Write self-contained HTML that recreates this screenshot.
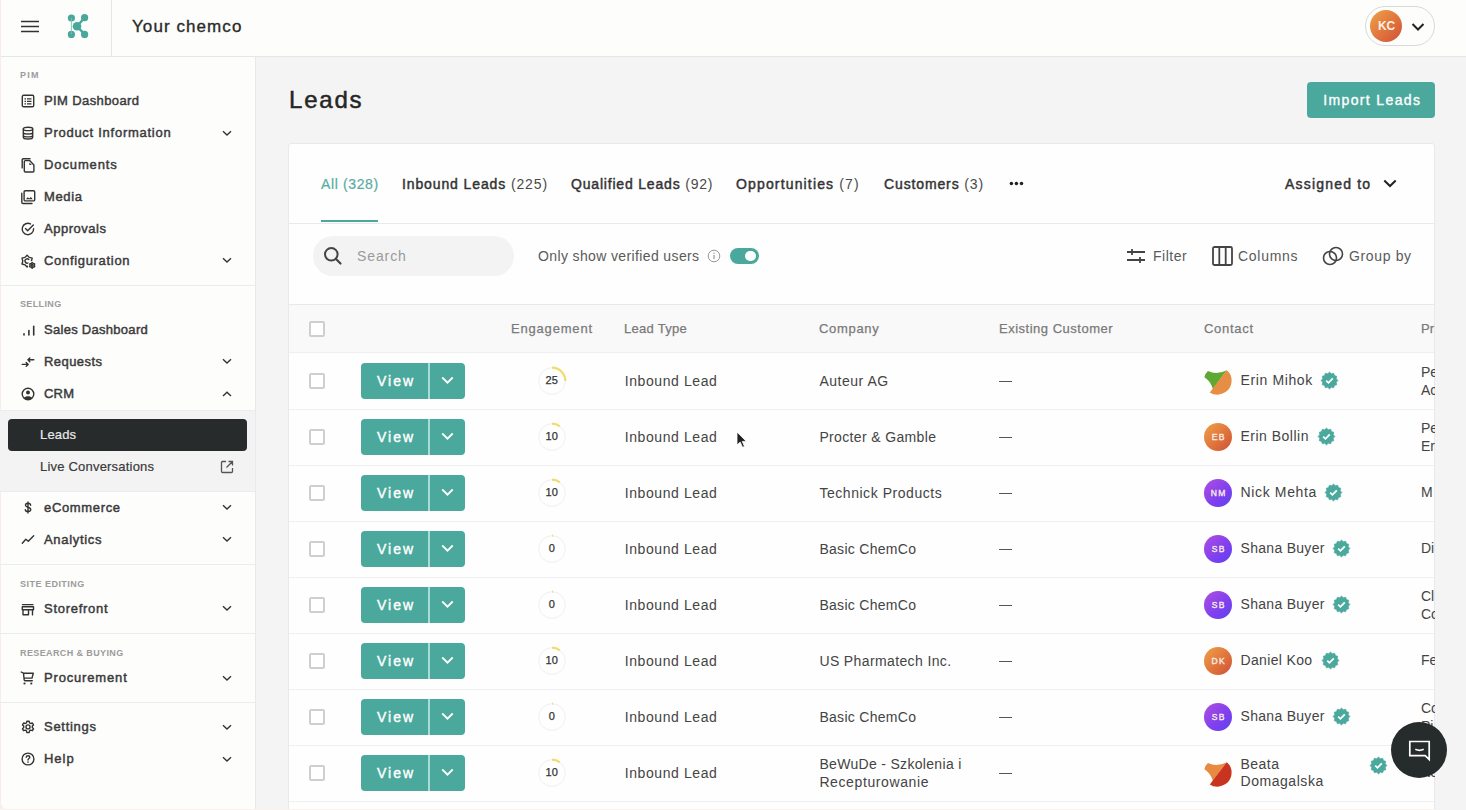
<!DOCTYPE html><html><head><meta charset="utf-8"><style>
*{box-sizing:border-box;margin:0;padding:0}
html,body{width:1466px;height:810px;overflow:hidden}
body{position:relative;background:#f4f4f4;font-family:"Liberation Sans",sans-serif;color:#333}
.a{position:absolute;white-space:nowrap}
svg.a{overflow:visible}
</style></head><body>
<div class="a" style="left:0;top:0;width:1466px;height:56px;background:#fdfdfc"></div>
<div class="a" style="left:0;top:56px;width:1466px;height:1px;background:#e5e6e9"></div>
<svg class="a" style="left:20px;top:19px" width="20" height="15" viewBox="0 0 20 15"><path d="M1 2.5H19M1 7.5H19M1 12.5H19" stroke="#333" stroke-width="1.7"/></svg>
<svg class="a" style="left:66px;top:13px" width="24" height="26" viewBox="0 0 24 26"><g fill="#4aa79b"><circle cx="5.4" cy="5" r="3.6"/><circle cx="18.6" cy="4.7" r="3.6"/><circle cx="5.4" cy="21.4" r="3.6"/><circle cx="18.6" cy="21.4" r="3.6"/><circle cx="11" cy="13.3" r="4.3"/></g><path d="M5.4 5V21.4" stroke="#7cc2b8" stroke-width="0.9" fill="none"/><path d="M18.6 4.7L11 13.3L18.6 21.4" stroke="#4aa79b" stroke-width="2.4" fill="none"/></svg>
<div class="a" style="left:111px;top:0;width:1px;height:56px;background:#e6e6ea"></div>
<div class="a" style="left:132px;top:15.81px;font-size:17px;line-height:21px;font-weight:normal;color:#2a2a2a;letter-spacing:1.075px;-webkit-text-stroke:0.35px #2a2a2a">Your chemco</div>
<div class="a" style="left:1365px;top:6px;width:70px;height:40px;border:1.3px solid #d9d9d9;border-radius:20px;background:#fdfdfc"></div>
<div class="a" style="left:1370px;top:10px;width:32px;height:32px;border-radius:50%;background:linear-gradient(135deg,#eea24a 0%,#e0743c 55%,#cf4f3a 100%)"></div>
<div class="a" style="left:1378px;top:18.94px;font-size:12px;line-height:15px;font-weight:bold;color:#fbeee6;letter-spacing:-0.084px;">KC</div>
<svg class="a" style="left:1411px;top:22px" width="14" height="10" viewBox="0 0 14 10"><path d="M1.5 2L7 7.5L12.5 2" stroke="#222" stroke-width="2" fill="none"/></svg>
<div class="a" style="left:0;top:57px;width:255px;height:753px;background:#fdfdfc;border-bottom-left-radius:10px"></div>
<div class="a" style="left:255px;top:57px;width:1px;height:753px;background:#e9e9ec"></div>
<div class="a" style="left:0;top:0;width:1px;height:810px;background:#f9eee7"></div>
<div class="a" style="left:20px;top:70.38px;font-size:9px;line-height:11px;font-weight:bold;color:#9b9b9b;letter-spacing:1.202px;">PIM</div>
<div class="a" style="left:44px;top:92.80px;font-size:13px;line-height:16px;font-weight:normal;color:#3a3a3a;letter-spacing:0.393px;-webkit-text-stroke:0.45px #3a3a3a">PIM Dashboard</div>
<svg class="a" style="left:21px;top:93.6px" width="14" height="14" viewBox="0 0 14 14"><rect x="1.3" y="1.3" width="11.4" height="11.4" rx="1.3" stroke="#333" stroke-width="1.4" fill="none" stroke-linecap="round" stroke-linejoin="round"/><path d="M3.5 4.9H5M6 4.9H10.5M3.5 7.4H5M6 7.4H10.5M3.5 9.9H5M6 9.9H10.5" stroke="#333" stroke-width="1.2"/></svg>
<div class="a" style="left:44px;top:124.90px;font-size:13px;line-height:16px;font-weight:normal;color:#3a3a3a;letter-spacing:0.733px;-webkit-text-stroke:0.45px #3a3a3a">Product Information</div>
<svg class="a" style="left:21px;top:125.7px" width="14" height="14" viewBox="0 0 14 14"><ellipse cx="7" cy="2.9" rx="4.7" ry="1.7" stroke="#333" stroke-width="1.4" fill="none" stroke-linecap="round" stroke-linejoin="round"/><path d="M2.3 2.9V11.2C2.3 12.2 4.4 13 7 13S11.7 12.2 11.7 11.2V2.9M2.3 6.3C2.3 7.3 4.4 8 7 8S11.7 7.3 11.7 6.3M2.3 9.2C2.3 10.2 4.4 10.9 7 10.9S11.7 10.2 11.7 9.2" stroke="#333" stroke-width="1.4" fill="none" stroke-linecap="round" stroke-linejoin="round"/></svg>
<svg class="a" style="left:222px;top:129.5px" width="10" height="7" viewBox="0 0 10 7"><path d="M1 1.3L5 5L9 1.3" stroke="#333" stroke-width="1.4" fill="none"/></svg>
<div class="a" style="left:44px;top:156.90px;font-size:13px;line-height:16px;font-weight:normal;color:#3a3a3a;letter-spacing:0.886px;-webkit-text-stroke:0.45px #3a3a3a">Documents</div>
<svg class="a" style="left:21px;top:157.7px" width="14" height="14" viewBox="0 0 14 14"><path d="M1.2 9.9V1.8Q1.2 0.7 2.3 0.7H9" stroke="#333" stroke-width="1.4" fill="none" stroke-linecap="round" stroke-linejoin="round"/><path d="M4.3 2.6H8.6L12.9 6.9V13C12.9 13.6 12.5 14 11.9 14H4.3C3.7 14 3.3 13.6 3.3 13V3.6C3.3 3 3.7 2.6 4.3 2.6Z" stroke="#333" stroke-width="1.4" fill="none" stroke-linecap="round" stroke-linejoin="round"/><path d="M8.3 4.6L10.8 7.1H8.3Z" fill="#333"/></svg>
<div class="a" style="left:44px;top:188.90px;font-size:13px;line-height:16px;font-weight:normal;color:#3a3a3a;letter-spacing:0.655px;-webkit-text-stroke:0.45px #3a3a3a">Media</div>
<svg class="a" style="left:21px;top:189.7px" width="14" height="14" viewBox="0 0 14 14"><path d="M0.8 3.2V12.3Q0.8 13.5 2 13.5H11" stroke="#333" stroke-width="1.4" fill="none" stroke-linecap="round" stroke-linejoin="round"/><rect x="3.1" y="0.7" width="10.6" height="10.2" rx="1.2" stroke="#333" stroke-width="1.4" fill="none" stroke-linecap="round" stroke-linejoin="round"/><path d="M4.9 9.3L6.8 7.3L8.2 8.5L9.8 7.1L11.8 9.3Z" fill="#333"/></svg>
<div class="a" style="left:44px;top:220.80px;font-size:13px;line-height:16px;font-weight:normal;color:#3a3a3a;letter-spacing:0.528px;-webkit-text-stroke:0.45px #3a3a3a">Approvals</div>
<svg class="a" style="left:21px;top:221.6px" width="14" height="14" viewBox="0 0 14 14"><path d="M12.6 6.6A5.7 5.7 0 1 1 9.5 1.9" stroke="#333" stroke-width="1.4" fill="none" stroke-linecap="round" stroke-linejoin="round"/><path d="M4.5 6.6L6.6 8.7L12.3 3" stroke="#333" stroke-width="1.4" fill="none" stroke-linecap="round" stroke-linejoin="round"/></svg>
<div class="a" style="left:44px;top:252.70px;font-size:13px;line-height:16px;font-weight:normal;color:#3a3a3a;letter-spacing:0.684px;-webkit-text-stroke:0.45px #3a3a3a">Configuration</div>
<svg class="a" style="left:21px;top:253.5px" width="14" height="14" viewBox="0 0 14 14"><path d="M6.10 1.20L8.25 3.38L11.21 4.15L10.40 7.10L11.21 10.05L8.25 10.82L6.10 13.00L3.95 10.82L0.99 10.05L1.80 7.10L0.99 4.15L3.95 3.38Z" stroke="#333" stroke-width="1.4" fill="none" stroke-linecap="round" stroke-linejoin="round"/><path d="M7.9 5.6A2.2 2.2 0 1 0 7.3 9" stroke="#333" stroke-width="1.4" fill="none" stroke-linecap="round" stroke-linejoin="round"/><circle cx="11.2" cy="11.3" r="4.3" fill="#fdfdfc"/><path d="M11.20 8.40L12.25 9.48L13.71 9.85L13.30 11.30L13.71 12.75L12.25 13.12L11.20 14.20L10.15 13.12L8.69 12.75L9.10 11.30L8.69 9.85L10.15 9.48Z" stroke="#333" stroke-width="1.4" fill="none" stroke-linecap="round" stroke-linejoin="round"/><circle cx="11.2" cy="11.3" r="0.9" stroke="#333" stroke-width="1.4" fill="none" stroke-linecap="round" stroke-linejoin="round"/></svg>
<svg class="a" style="left:222px;top:257.3px" width="10" height="7" viewBox="0 0 10 7"><path d="M1 1.3L5 5L9 1.3" stroke="#333" stroke-width="1.4" fill="none"/></svg>
<div class="a" style="left:0;top:285px;width:255px;height:1px;background:#ececef"></div>
<div class="a" style="left:20px;top:299.38px;font-size:9px;line-height:11px;font-weight:bold;color:#9b9b9b;letter-spacing:0.367px;">SELLING</div>
<div class="a" style="left:44px;top:322.00px;font-size:13px;line-height:16px;font-weight:normal;color:#3a3a3a;letter-spacing:0.286px;-webkit-text-stroke:0.45px #3a3a3a">Sales Dashboard</div>
<svg class="a" style="left:21px;top:322.8px" width="14" height="14" viewBox="0 0 14 14"><path d="M3 12V10.9M7.9 12V7.5M12.7 12V3.2" stroke="#333" stroke-width="1.6" stroke-linecap="round"/></svg>
<div class="a" style="left:44px;top:353.80px;font-size:13px;line-height:16px;font-weight:normal;color:#3a3a3a;letter-spacing:0.445px;-webkit-text-stroke:0.45px #3a3a3a">Requests</div>
<svg class="a" style="left:21px;top:354.6px" width="14" height="14" viewBox="0 0 14 14"><path d="M1.2 9.4H7.2M5.2 7.5L7.2 9.4L5.2 11.3M12.8 4.8H7M8.8 2.9L6.9 4.8L8.8 6.7" stroke="#333" stroke-width="1.4" fill="none" stroke-linecap="round" stroke-linejoin="round"/></svg>
<svg class="a" style="left:222px;top:358.4px" width="10" height="7" viewBox="0 0 10 7"><path d="M1 1.3L5 5L9 1.3" stroke="#333" stroke-width="1.4" fill="none"/></svg>
<div class="a" style="left:44px;top:385.90px;font-size:13px;line-height:16px;font-weight:normal;color:#3a3a3a;letter-spacing:0.215px;-webkit-text-stroke:0.45px #3a3a3a">CRM</div>
<svg class="a" style="left:21px;top:386.7px" width="14" height="14" viewBox="0 0 14 14"><circle cx="7" cy="7" r="5.8" stroke="#333" stroke-width="1.4" fill="none" stroke-linecap="round" stroke-linejoin="round"/><circle cx="7" cy="5.4" r="2" fill="#333"/><path d="M2.9 10.9C4.2 8.7 9.8 8.7 11.1 10.9C9.6 12.9 4.4 12.9 2.9 10.9Z" fill="#333"/></svg>
<svg class="a" style="left:222px;top:390.5px" width="10" height="7" viewBox="0 0 10 7"><path d="M1 5L5 1.3L9 5" stroke="#333" stroke-width="1.4" fill="none"/></svg>
<div class="a" style="left:0;top:410px;width:255px;height:82px;background:#f3f3f4"></div>
<div class="a" style="left:0;top:410px;width:255px;height:1px;background:#ececef"></div>
<div class="a" style="left:0;top:491px;width:255px;height:1px;background:#ececef"></div>
<div class="a" style="left:8px;top:419px;width:239px;height:32px;border-radius:4px;background:#272b2c"></div>
<div class="a" style="left:40px;top:426.80px;font-size:13px;line-height:16px;font-weight:normal;color:#e9e9e9;letter-spacing:0.155px;-webkit-text-stroke:0.2px #e9e9e9">Leads</div>
<div class="a" style="left:40px;top:458.50px;font-size:13px;line-height:16px;font-weight:normal;color:#3a3a3a;letter-spacing:0.205px;-webkit-text-stroke:0.2px #3a3a3a">Live Conversations</div>
<svg class="a" style="left:220px;top:460px" width="14" height="14" viewBox="0 0 14 14"><path d="M6 1.5H2.6C2 1.5 1.5 2 1.5 2.6V11.4C1.5 12 2 12.5 2.6 12.5H11.4C12 12.5 12.5 12 12.5 11.4V8M8.5 1.5H12.5V5.5M12.3 1.7L6.5 7.5" stroke="#555" stroke-width="1.3" fill="none"/></svg>
<div class="a" style="left:44px;top:499.70px;font-size:13px;line-height:16px;font-weight:normal;color:#3a3a3a;letter-spacing:0.655px;-webkit-text-stroke:0.45px #3a3a3a">eCommerce</div>
<svg class="a" style="left:21px;top:500.5px" width="14" height="14" viewBox="0 0 14 14"><path d="M9.6 4.2C9.4 2.9 8.3 2.3 7 2.3C5.6 2.3 4.5 3 4.5 4.2C4.5 6.8 9.7 5.6 9.7 8.6C9.7 9.9 8.5 10.6 7 10.6C5.5 10.6 4.4 9.9 4.3 8.6M7 1V12" stroke="#333" stroke-width="1.4" fill="none" stroke-linecap="round" stroke-linejoin="round"/></svg>
<svg class="a" style="left:222px;top:504.3px" width="10" height="7" viewBox="0 0 10 7"><path d="M1 1.3L5 5L9 1.3" stroke="#333" stroke-width="1.4" fill="none"/></svg>
<div class="a" style="left:44px;top:531.50px;font-size:13px;line-height:16px;font-weight:normal;color:#3a3a3a;letter-spacing:0.689px;-webkit-text-stroke:0.45px #3a3a3a">Analytics</div>
<svg class="a" style="left:21px;top:532.3px" width="14" height="14" viewBox="0 0 14 14"><path d="M1.3 11.2L4.8 7.2L7.3 9.3L12.7 3.8" stroke="#333" stroke-width="1.4" fill="none" stroke-linecap="round" stroke-linejoin="round"/></svg>
<svg class="a" style="left:222px;top:536.1px" width="10" height="7" viewBox="0 0 10 7"><path d="M1 1.3L5 5L9 1.3" stroke="#333" stroke-width="1.4" fill="none"/></svg>
<div class="a" style="left:0;top:564px;width:255px;height:1px;background:#ececef"></div>
<div class="a" style="left:20px;top:578.88px;font-size:9px;line-height:11px;font-weight:bold;color:#9b9b9b;letter-spacing:0.482px;">SITE EDITING</div>
<div class="a" style="left:44px;top:600.80px;font-size:13px;line-height:16px;font-weight:normal;color:#3a3a3a;letter-spacing:0.716px;-webkit-text-stroke:0.45px #3a3a3a">Storefront</div>
<svg class="a" style="left:21px;top:601.6px" width="14" height="14" viewBox="0 0 14 14"><path d="M1.5 2.6H12M1.3 4.7H12.5V7.8H1.3Z M2 7.8V12.7H7.5V7.8M11.5 7.8V12.9" stroke="#333" stroke-width="1.4" fill="none" stroke-linecap="round" stroke-linejoin="round"/></svg>
<svg class="a" style="left:222px;top:605.4px" width="10" height="7" viewBox="0 0 10 7"><path d="M1 1.3L5 5L9 1.3" stroke="#333" stroke-width="1.4" fill="none"/></svg>
<div class="a" style="left:0;top:633px;width:255px;height:1px;background:#ececef"></div>
<div class="a" style="left:20px;top:647.68px;font-size:9px;line-height:11px;font-weight:bold;color:#9b9b9b;letter-spacing:0.388px;">RESEARCH &amp; BUYING</div>
<div class="a" style="left:44px;top:670.00px;font-size:13px;line-height:16px;font-weight:normal;color:#3a3a3a;letter-spacing:0.832px;-webkit-text-stroke:0.45px #3a3a3a">Procurement</div>
<svg class="a" style="left:21px;top:670.8px" width="14" height="14" viewBox="0 0 14 14"><path d="M0.2 1L2.5 2.2L3.2 9Q3.3 9.8 4 9.8H11.3M2.6 2.3H12.3L11 7.1H3.5" stroke="#333" stroke-width="1.4" fill="none" stroke-linecap="round" stroke-linejoin="round"/><circle cx="3.5" cy="12.5" r="1.1" fill="#333"/><circle cx="10.3" cy="12.5" r="1.1" fill="#333"/></svg>
<svg class="a" style="left:222px;top:674.6px" width="10" height="7" viewBox="0 0 10 7"><path d="M1 1.3L5 5L9 1.3" stroke="#333" stroke-width="1.4" fill="none"/></svg>
<div class="a" style="left:0;top:702px;width:255px;height:1px;background:#ececef"></div>
<div class="a" style="left:44px;top:719.00px;font-size:13px;line-height:16px;font-weight:normal;color:#3a3a3a;letter-spacing:0.722px;-webkit-text-stroke:0.45px #3a3a3a">Settings</div>
<svg class="a" style="left:21px;top:719.8px" width="14" height="14" viewBox="0 0 14 14"><path d="M5.9 1.2H8.1L8.5 2.8L9.8 3.5L11.4 3L12.5 4.9L11.3 6.1V7.6L12.5 8.8L11.4 10.7L9.8 10.2L8.5 10.9L8.1 12.6H5.9L5.5 10.9L4.2 10.2L2.6 10.7L1.5 8.8L2.7 7.6V6.1L1.5 4.9L2.6 3L4.2 3.5L5.5 2.8Z" stroke="#333" stroke-width="1.4" fill="none" stroke-linecap="round" stroke-linejoin="round"/><circle cx="7" cy="6.9" r="2" stroke="#333" stroke-width="1.4" fill="none" stroke-linecap="round" stroke-linejoin="round"/></svg>
<svg class="a" style="left:222px;top:723.6px" width="10" height="7" viewBox="0 0 10 7"><path d="M1 1.3L5 5L9 1.3" stroke="#333" stroke-width="1.4" fill="none"/></svg>
<div class="a" style="left:44px;top:751.40px;font-size:13px;line-height:16px;font-weight:normal;color:#3a3a3a;letter-spacing:0.963px;-webkit-text-stroke:0.45px #3a3a3a">Help</div>
<svg class="a" style="left:21px;top:752.2px" width="14" height="14" viewBox="0 0 14 14"><circle cx="7" cy="7" r="5.9" stroke="#333" stroke-width="1.4" fill="none" stroke-linecap="round" stroke-linejoin="round"/><path d="M5.2 5.3C5.3 4.3 6 3.7 7 3.7C8.1 3.7 8.8 4.4 8.8 5.3C8.8 6.5 7 6.5 7 8" stroke="#333" stroke-width="1.4" fill="none" stroke-linecap="round" stroke-linejoin="round"/><circle cx="7" cy="10.1" r="0.8" fill="#333"/></svg>
<svg class="a" style="left:222px;top:756.0px" width="10" height="7" viewBox="0 0 10 7"><path d="M1 1.3L5 5L9 1.3" stroke="#333" stroke-width="1.4" fill="none"/></svg>
<div class="a" style="left:289px;top:85.18px;font-size:24px;line-height:30px;font-weight:normal;color:#262626;letter-spacing:1.807px;-webkit-text-stroke:0.5px #262626">Leads</div>
<div class="a" style="left:1307px;top:82px;width:128px;height:36px;border-radius:4px;background:#4ba89c"></div>
<div class="a" style="left:1323.3px;top:91.15px;font-size:14px;line-height:18px;font-weight:normal;color:#fff;letter-spacing:1.355px;-webkit-text-stroke:0.35px #fff">Import Leads</div>
<div class="a" style="left:288px;top:143px;width:1147px;height:680px;background:#fefefe;border:1px solid #e9e9eb;border-radius:3px"></div>
<div class="a" style="left:321px;top:174.65px;font-size:14px;line-height:18px;font-weight:normal;color:#57aca1;letter-spacing:0.622px;-webkit-text-stroke:0.2px #57aca1">All <span style="font-weight:normal">(328)</span></div>
<div class="a" style="left:402px;top:174.65px;font-size:14px;line-height:18px;font-weight:normal;color:#333;letter-spacing:0.883px;-webkit-text-stroke:0.45px #333">Inbound Leads <span style="font-weight:normal;color:#4a4a4a;-webkit-text-stroke:0">(225)</span></div>
<div class="a" style="left:571px;top:174.65px;font-size:14px;line-height:18px;font-weight:normal;color:#333;letter-spacing:0.812px;-webkit-text-stroke:0.45px #333">Qualified Leads <span style="font-weight:normal;color:#4a4a4a;-webkit-text-stroke:0">(92)</span></div>
<div class="a" style="left:736px;top:174.65px;font-size:14px;line-height:18px;font-weight:normal;color:#333;letter-spacing:1.151px;-webkit-text-stroke:0.45px #333">Opportunities <span style="font-weight:normal;color:#4a4a4a;-webkit-text-stroke:0">(7)</span></div>
<div class="a" style="left:884px;top:174.65px;font-size:14px;line-height:18px;font-weight:normal;color:#333;letter-spacing:0.868px;-webkit-text-stroke:0.45px #333">Customers <span style="font-weight:normal;color:#4a4a4a;-webkit-text-stroke:0">(3)</span></div>
<svg class="a" style="left:1009px;top:181px" width="15" height="5" viewBox="0 0 15 5"><circle cx="2.4" cy="2.4" r="1.75" fill="#222"/><circle cx="7.4" cy="2.4" r="1.75" fill="#222"/><circle cx="12.5" cy="2.4" r="1.75" fill="#222"/></svg>
<div class="a" style="left:1285px;top:174.65px;font-size:14px;line-height:18px;font-weight:normal;color:#333;letter-spacing:1.195px;-webkit-text-stroke:0.45px #333">Assigned to</div>
<svg class="a" style="left:1383px;top:179px" width="14" height="9" viewBox="0 0 14 9"><path d="M1.3 1.5L7 7L12.7 1.5" stroke="#222" stroke-width="2" fill="none"/></svg>
<div class="a" style="left:321px;top:220px;width:57px;height:2px;background:#4ba89c"></div>
<div class="a" style="left:289px;top:223px;width:1145px;height:1px;background:#e9e9ec"></div>
<div class="a" style="left:313px;top:236px;width:201px;height:40px;border-radius:20px;background:#f3f3f3"></div>
<svg class="a" style="left:323px;top:246px" width="20" height="20" viewBox="0 0 20 20"><circle cx="8.3" cy="8.3" r="6.3" stroke="#444" stroke-width="2" fill="none"/><path d="M13 13L17.5 17.5" stroke="#444" stroke-width="2.2" stroke-linecap="round"/></svg>
<div class="a" style="left:357px;top:247.15px;font-size:14px;line-height:18px;font-weight:normal;color:#9a9a9a;letter-spacing:0.892px;">Search</div>
<div class="a" style="left:538px;top:247.15px;font-size:14px;line-height:18px;font-weight:normal;color:#5a5a5a;letter-spacing:0.374px;">Only show verified users</div>
<svg class="a" style="left:707px;top:249px" width="14" height="14" viewBox="0 0 14 14"><circle cx="7" cy="7" r="5.8" stroke="#999" stroke-width="1" fill="none"/><path d="M7 6V10" stroke="#999" stroke-width="1.2"/><circle cx="7" cy="4.2" r="0.7" fill="#999"/></svg>
<div class="a" style="left:730px;top:248px;width:29px;height:16px;border-radius:8px;background:#4ba89c"></div>
<div class="a" style="left:745.3px;top:250.8px;width:10.5px;height:10.5px;border-radius:50%;background:#fff"></div>
<svg class="a" style="left:1126px;top:248px" width="20" height="16" viewBox="0 0 20 16"><path d="M1 4H19M1 12H19M6 1V7M14 9V15" stroke="#444" stroke-width="1.8"/></svg>
<div class="a" style="left:1153px;top:247.15px;font-size:14px;line-height:18px;font-weight:normal;color:#5a5a5a;letter-spacing:0.499px;">Filter</div>
<svg class="a" style="left:1212px;top:246px" width="21" height="20" viewBox="0 0 21 20"><rect x="1" y="1" width="19" height="18" rx="1.5" stroke="#444" stroke-width="1.8" fill="none"/><path d="M7.3 1V19M13.7 1V19" stroke="#444" stroke-width="1.8"/></svg>
<div class="a" style="left:1238px;top:247.15px;font-size:14px;line-height:18px;font-weight:normal;color:#5a5a5a;letter-spacing:0.712px;">Columns</div>
<svg class="a" style="left:1322px;top:246px" width="22" height="20" viewBox="0 0 22 20"><circle cx="8" cy="12" r="6.5" stroke="#444" stroke-width="1.6" fill="none"/><circle cx="14" cy="8" r="6.5" stroke="#444" stroke-width="1.6" fill="none"/></svg>
<div class="a" style="left:1349px;top:247.15px;font-size:14px;line-height:18px;font-weight:normal;color:#5a5a5a;letter-spacing:0.647px;">Group by</div>
<div class="a" style="left:289px;top:304px;width:1145px;height:1px;background:#e9e9ec"></div>
<div class="a" style="left:289px;top:305px;width:1145px;height:47px;background:#f9f9f9"></div>
<div class="a" style="left:289px;top:352px;width:1145px;height:1px;background:#efeff0"></div>
<div class="a" style="left:309px;top:321px;width:16px;height:16px;border:2px solid #cfcfcf;border-radius:2px;background:#fff"></div>
<div class="a" style="left:511px;top:320.50px;font-size:13px;line-height:16px;font-weight:normal;color:#7a7a7a;letter-spacing:0.812px;-webkit-text-stroke:0.25px #7a7a7a">Engagement</div>
<div class="a" style="left:624px;top:320.50px;font-size:13px;line-height:16px;font-weight:normal;color:#7a7a7a;letter-spacing:0.282px;-webkit-text-stroke:0.25px #7a7a7a">Lead Type</div>
<div class="a" style="left:819px;top:320.50px;font-size:13px;line-height:16px;font-weight:normal;color:#7a7a7a;letter-spacing:0.683px;-webkit-text-stroke:0.25px #7a7a7a">Company</div>
<div class="a" style="left:999px;top:320.50px;font-size:13px;line-height:16px;font-weight:normal;color:#7a7a7a;letter-spacing:0.510px;-webkit-text-stroke:0.25px #7a7a7a">Existing Customer</div>
<div class="a" style="left:1204px;top:320.50px;font-size:13px;line-height:16px;font-weight:normal;color:#7a7a7a;letter-spacing:0.705px;-webkit-text-stroke:0.25px #7a7a7a">Contact</div>
<div class="a" style="left:1421px;top:320.50px;font-size:13px;line-height:16px;font-weight:normal;color:#7a7a7a;-webkit-text-stroke:0.25px #7a7a7a">Pr</div>
<div class="a" style="left:309px;top:373.3px;width:16px;height:16px;border:2px solid #cfcfcf;border-radius:2px;background:#fff"></div>
<div class="a" style="left:361px;top:363px;width:104px;height:36px;border-radius:4px;background:#4ba89c"></div>
<div class="a" style="left:428.2px;top:363px;width:1.4px;height:36px;background:#a9dcd5"></div>
<div class="a" style="left:377px;top:372.35px;font-size:14px;line-height:18px;font-weight:normal;color:#fff;letter-spacing:2.009px;-webkit-text-stroke:0.4px #fff">View</div>
<svg class="a" style="left:441px;top:376px" width="13" height="9" viewBox="0 0 13 9"><path d="M1.3 1.5L6.5 6.7L11.7 1.5" stroke="#fff" stroke-width="1.9" fill="none"/></svg>
<svg class="a" style="left:536.6px;top:365.5px" width="30" height="30" viewBox="0 0 30 30"><circle cx="15" cy="15" r="13.3" stroke="#f0f0f3" stroke-width="1" fill="#fefefe"/><path d="M15 1.7A13.3 13.3 0 0 1 28.30 15.00" stroke="#f1dc6e" stroke-width="2.2" fill="none"/></svg>
<div class="a" style="left:536.7px;top:372px;width:30px;text-align:center;font-size:11px;line-height:16px;color:#333;-webkit-text-stroke:0.25px #333">25</div>
<div class="a" style="left:624.7px;top:372.05px;font-size:14px;line-height:18px;font-weight:normal;color:#444;letter-spacing:0.589px;">Inbound Lead</div>
<div class="a" style="left:819.4px;top:372.05px;font-size:14px;line-height:18px;font-weight:normal;color:#444;letter-spacing:0.528px;">Auteur AG</div>
<div class="a" style="left:999px;top:381.2px;width:13px;height:1.3px;background:#555"></div>
<svg class="a" style="left:1204px;top:366px" width="28" height="28" viewBox="0 0 28 28"><path d="M4 5.1Q13 9.5 22.7 4.2L8.9 22.9Q6.5 15 0.4 11.3Q1.5 7 4 5.1Z" fill="#5fa834"/><path d="M22.7 4.2Q28 8.5 27.6 15Q27 26.5 13.8 28.7Q9 28.8 5.8 26.4Z" fill="#e88d44"/></svg>
<div class="a" style="left:1240.5px;top:371.15px;font-size:14px;line-height:18px;font-weight:normal;color:#444;letter-spacing:0.620px;">Erin Mihok</div>
<svg class="a" style="left:1320.7px;top:371.5px" width="17" height="17" viewBox="0 0 16 16"><path d="M8.00 0.10L9.71 1.62L11.95 1.16L12.67 3.33L14.84 4.05L14.38 6.29L15.90 8.00L14.38 9.71L14.84 11.95L12.67 12.67L11.95 14.84L9.71 14.38L8.00 15.90L6.29 14.38L4.05 14.84L3.33 12.67L1.16 11.95L1.62 9.71L0.10 8.00L1.62 6.29L1.16 4.05L3.33 3.33L4.05 1.16L6.29 1.62Z" fill="#4ba89c" stroke="#4ba89c" stroke-width="0.6" stroke-linejoin="round"/><path d="M4.9 8.2L7 10.2L11.1 6" stroke="#fff" stroke-width="1.7" fill="none"/></svg>
<div class="a" style="left:1421px;top:362.65px;font-size:14px;line-height:18px;font-weight:normal;color:#444;">Pe</div>
<div class="a" style="left:1421px;top:380.65px;font-size:14px;line-height:18px;font-weight:normal;color:#444;">Ac</div>
<div class="a" style="left:289px;top:408.7px;width:1145px;height:1px;background:#efeff0"></div>
<div class="a" style="left:309px;top:429.3px;width:16px;height:16px;border:2px solid #cfcfcf;border-radius:2px;background:#fff"></div>
<div class="a" style="left:361px;top:419px;width:104px;height:36px;border-radius:4px;background:#4ba89c"></div>
<div class="a" style="left:428.2px;top:419px;width:1.4px;height:36px;background:#a9dcd5"></div>
<div class="a" style="left:377px;top:428.35px;font-size:14px;line-height:18px;font-weight:normal;color:#fff;letter-spacing:2.009px;-webkit-text-stroke:0.4px #fff">View</div>
<svg class="a" style="left:441px;top:432px" width="13" height="9" viewBox="0 0 13 9"><path d="M1.3 1.5L6.5 6.7L11.7 1.5" stroke="#fff" stroke-width="1.9" fill="none"/></svg>
<svg class="a" style="left:536.6px;top:421.5px" width="30" height="30" viewBox="0 0 30 30"><circle cx="15" cy="15" r="13.3" stroke="#f0f0f3" stroke-width="1" fill="#fefefe"/><path d="M15 1.7A13.3 13.3 0 0 1 22.82 4.24" stroke="#f1dc6e" stroke-width="2.2" fill="none"/></svg>
<div class="a" style="left:536.7px;top:428px;width:30px;text-align:center;font-size:11px;line-height:16px;color:#333;-webkit-text-stroke:0.25px #333">10</div>
<div class="a" style="left:624.7px;top:428.05px;font-size:14px;line-height:18px;font-weight:normal;color:#444;letter-spacing:0.589px;">Inbound Lead</div>
<div class="a" style="left:819.4px;top:428.05px;font-size:14px;line-height:18px;font-weight:normal;color:#444;letter-spacing:0.357px;">Procter &amp; Gamble</div>
<div class="a" style="left:999px;top:437.2px;width:13px;height:1.3px;background:#555"></div>
<div class="a" style="left:1204px;top:422.7px;width:28px;height:28px;border-radius:50%;background:linear-gradient(135deg,#eea24a,#e0743c 55%,#cf4f3a);color:#f8ece6;font-size:8.5px;line-height:28px;text-align:center;letter-spacing:1.3px;padding-left:1.3px;padding-top:0.6px;-webkit-text-stroke:0.35px #f8ece6">EB</div>
<div class="a" style="left:1240.5px;top:427.15px;font-size:14px;line-height:18px;font-weight:normal;color:#444;letter-spacing:0.489px;">Erin Bollin</div>
<svg class="a" style="left:1317.7px;top:427.5px" width="17" height="17" viewBox="0 0 16 16"><path d="M8.00 0.10L9.71 1.62L11.95 1.16L12.67 3.33L14.84 4.05L14.38 6.29L15.90 8.00L14.38 9.71L14.84 11.95L12.67 12.67L11.95 14.84L9.71 14.38L8.00 15.90L6.29 14.38L4.05 14.84L3.33 12.67L1.16 11.95L1.62 9.71L0.10 8.00L1.62 6.29L1.16 4.05L3.33 3.33L4.05 1.16L6.29 1.62Z" fill="#4ba89c" stroke="#4ba89c" stroke-width="0.6" stroke-linejoin="round"/><path d="M4.9 8.2L7 10.2L11.1 6" stroke="#fff" stroke-width="1.7" fill="none"/></svg>
<div class="a" style="left:1421px;top:418.65px;font-size:14px;line-height:18px;font-weight:normal;color:#444;">Pe</div>
<div class="a" style="left:1421px;top:436.65px;font-size:14px;line-height:18px;font-weight:normal;color:#444;">Er</div>
<div class="a" style="left:289px;top:464.7px;width:1145px;height:1px;background:#efeff0"></div>
<div class="a" style="left:309px;top:485.3px;width:16px;height:16px;border:2px solid #cfcfcf;border-radius:2px;background:#fff"></div>
<div class="a" style="left:361px;top:475px;width:104px;height:36px;border-radius:4px;background:#4ba89c"></div>
<div class="a" style="left:428.2px;top:475px;width:1.4px;height:36px;background:#a9dcd5"></div>
<div class="a" style="left:377px;top:484.35px;font-size:14px;line-height:18px;font-weight:normal;color:#fff;letter-spacing:2.009px;-webkit-text-stroke:0.4px #fff">View</div>
<svg class="a" style="left:441px;top:488px" width="13" height="9" viewBox="0 0 13 9"><path d="M1.3 1.5L6.5 6.7L11.7 1.5" stroke="#fff" stroke-width="1.9" fill="none"/></svg>
<svg class="a" style="left:536.6px;top:477.5px" width="30" height="30" viewBox="0 0 30 30"><circle cx="15" cy="15" r="13.3" stroke="#f0f0f3" stroke-width="1" fill="#fefefe"/><path d="M15 1.7A13.3 13.3 0 0 1 22.82 4.24" stroke="#f1dc6e" stroke-width="2.2" fill="none"/></svg>
<div class="a" style="left:536.7px;top:484px;width:30px;text-align:center;font-size:11px;line-height:16px;color:#333;-webkit-text-stroke:0.25px #333">10</div>
<div class="a" style="left:624.7px;top:484.05px;font-size:14px;line-height:18px;font-weight:normal;color:#444;letter-spacing:0.589px;">Inbound Lead</div>
<div class="a" style="left:819.4px;top:484.05px;font-size:14px;line-height:18px;font-weight:normal;color:#444;letter-spacing:0.544px;">Technick Products</div>
<div class="a" style="left:999px;top:493.2px;width:13px;height:1.3px;background:#555"></div>
<div class="a" style="left:1204px;top:478.7px;width:28px;height:28px;border-radius:50%;background:linear-gradient(135deg,#b14fe0,#7e3ff0 60%,#5d44ee);color:#f8ece6;font-size:8.5px;line-height:28px;text-align:center;letter-spacing:1.3px;padding-left:1.3px;padding-top:0.6px;-webkit-text-stroke:0.35px #f8ece6">NM</div>
<div class="a" style="left:1240.5px;top:483.15px;font-size:14px;line-height:18px;font-weight:normal;color:#444;letter-spacing:0.643px;">Nick Mehta</div>
<svg class="a" style="left:1325.3px;top:483.5px" width="17" height="17" viewBox="0 0 16 16"><path d="M8.00 0.10L9.71 1.62L11.95 1.16L12.67 3.33L14.84 4.05L14.38 6.29L15.90 8.00L14.38 9.71L14.84 11.95L12.67 12.67L11.95 14.84L9.71 14.38L8.00 15.90L6.29 14.38L4.05 14.84L3.33 12.67L1.16 11.95L1.62 9.71L0.10 8.00L1.62 6.29L1.16 4.05L3.33 3.33L4.05 1.16L6.29 1.62Z" fill="#4ba89c" stroke="#4ba89c" stroke-width="0.6" stroke-linejoin="round"/><path d="M4.9 8.2L7 10.2L11.1 6" stroke="#fff" stroke-width="1.7" fill="none"/></svg>
<div class="a" style="left:1421px;top:483.15px;font-size:14px;line-height:18px;font-weight:normal;color:#444;">M</div>
<div class="a" style="left:289px;top:520.7px;width:1145px;height:1px;background:#efeff0"></div>
<div class="a" style="left:309px;top:541.3px;width:16px;height:16px;border:2px solid #cfcfcf;border-radius:2px;background:#fff"></div>
<div class="a" style="left:361px;top:531px;width:104px;height:36px;border-radius:4px;background:#4ba89c"></div>
<div class="a" style="left:428.2px;top:531px;width:1.4px;height:36px;background:#a9dcd5"></div>
<div class="a" style="left:377px;top:540.35px;font-size:14px;line-height:18px;font-weight:normal;color:#fff;letter-spacing:2.009px;-webkit-text-stroke:0.4px #fff">View</div>
<svg class="a" style="left:441px;top:544px" width="13" height="9" viewBox="0 0 13 9"><path d="M1.3 1.5L6.5 6.7L11.7 1.5" stroke="#fff" stroke-width="1.9" fill="none"/></svg>
<svg class="a" style="left:536.6px;top:533.5px" width="30" height="30" viewBox="0 0 30 30"><circle cx="15" cy="15" r="13.3" stroke="#f0f0f3" stroke-width="1" fill="#fefefe"/><path d="M15 1.7A13.3 13.3 0 0 1 16.00 1.74" stroke="#f1dc6e" stroke-width="2.2" fill="none"/></svg>
<div class="a" style="left:536.7px;top:540px;width:30px;text-align:center;font-size:11px;line-height:16px;color:#333;-webkit-text-stroke:0.25px #333">0</div>
<div class="a" style="left:624.7px;top:540.05px;font-size:14px;line-height:18px;font-weight:normal;color:#444;letter-spacing:0.589px;">Inbound Lead</div>
<div class="a" style="left:819.4px;top:540.05px;font-size:14px;line-height:18px;font-weight:normal;color:#444;letter-spacing:0.295px;">Basic ChemCo</div>
<div class="a" style="left:999px;top:549.2px;width:13px;height:1.3px;background:#555"></div>
<div class="a" style="left:1204px;top:534.7px;width:28px;height:28px;border-radius:50%;background:linear-gradient(135deg,#b14fe0,#7e3ff0 60%,#5d44ee);color:#f8ece6;font-size:8.5px;line-height:28px;text-align:center;letter-spacing:1.3px;padding-left:1.3px;padding-top:0.6px;-webkit-text-stroke:0.35px #f8ece6">SB</div>
<div class="a" style="left:1240.5px;top:539.15px;font-size:14px;line-height:18px;font-weight:normal;color:#444;letter-spacing:0.297px;">Shana Buyer</div>
<svg class="a" style="left:1333.4px;top:539.5px" width="17" height="17" viewBox="0 0 16 16"><path d="M8.00 0.10L9.71 1.62L11.95 1.16L12.67 3.33L14.84 4.05L14.38 6.29L15.90 8.00L14.38 9.71L14.84 11.95L12.67 12.67L11.95 14.84L9.71 14.38L8.00 15.90L6.29 14.38L4.05 14.84L3.33 12.67L1.16 11.95L1.62 9.71L0.10 8.00L1.62 6.29L1.16 4.05L3.33 3.33L4.05 1.16L6.29 1.62Z" fill="#4ba89c" stroke="#4ba89c" stroke-width="0.6" stroke-linejoin="round"/><path d="M4.9 8.2L7 10.2L11.1 6" stroke="#fff" stroke-width="1.7" fill="none"/></svg>
<div class="a" style="left:1421px;top:539.15px;font-size:14px;line-height:18px;font-weight:normal;color:#444;">Di</div>
<div class="a" style="left:289px;top:576.7px;width:1145px;height:1px;background:#efeff0"></div>
<div class="a" style="left:309px;top:597.3px;width:16px;height:16px;border:2px solid #cfcfcf;border-radius:2px;background:#fff"></div>
<div class="a" style="left:361px;top:587px;width:104px;height:36px;border-radius:4px;background:#4ba89c"></div>
<div class="a" style="left:428.2px;top:587px;width:1.4px;height:36px;background:#a9dcd5"></div>
<div class="a" style="left:377px;top:596.35px;font-size:14px;line-height:18px;font-weight:normal;color:#fff;letter-spacing:2.009px;-webkit-text-stroke:0.4px #fff">View</div>
<svg class="a" style="left:441px;top:600px" width="13" height="9" viewBox="0 0 13 9"><path d="M1.3 1.5L6.5 6.7L11.7 1.5" stroke="#fff" stroke-width="1.9" fill="none"/></svg>
<svg class="a" style="left:536.6px;top:589.5px" width="30" height="30" viewBox="0 0 30 30"><circle cx="15" cy="15" r="13.3" stroke="#f0f0f3" stroke-width="1" fill="#fefefe"/><path d="M15 1.7A13.3 13.3 0 0 1 16.00 1.74" stroke="#f1dc6e" stroke-width="2.2" fill="none"/></svg>
<div class="a" style="left:536.7px;top:596px;width:30px;text-align:center;font-size:11px;line-height:16px;color:#333;-webkit-text-stroke:0.25px #333">0</div>
<div class="a" style="left:624.7px;top:596.05px;font-size:14px;line-height:18px;font-weight:normal;color:#444;letter-spacing:0.589px;">Inbound Lead</div>
<div class="a" style="left:819.4px;top:596.05px;font-size:14px;line-height:18px;font-weight:normal;color:#444;letter-spacing:0.295px;">Basic ChemCo</div>
<div class="a" style="left:999px;top:605.2px;width:13px;height:1.3px;background:#555"></div>
<div class="a" style="left:1204px;top:590.7px;width:28px;height:28px;border-radius:50%;background:linear-gradient(135deg,#b14fe0,#7e3ff0 60%,#5d44ee);color:#f8ece6;font-size:8.5px;line-height:28px;text-align:center;letter-spacing:1.3px;padding-left:1.3px;padding-top:0.6px;-webkit-text-stroke:0.35px #f8ece6">SB</div>
<div class="a" style="left:1240.5px;top:595.15px;font-size:14px;line-height:18px;font-weight:normal;color:#444;letter-spacing:0.297px;">Shana Buyer</div>
<svg class="a" style="left:1333.4px;top:595.5px" width="17" height="17" viewBox="0 0 16 16"><path d="M8.00 0.10L9.71 1.62L11.95 1.16L12.67 3.33L14.84 4.05L14.38 6.29L15.90 8.00L14.38 9.71L14.84 11.95L12.67 12.67L11.95 14.84L9.71 14.38L8.00 15.90L6.29 14.38L4.05 14.84L3.33 12.67L1.16 11.95L1.62 9.71L0.10 8.00L1.62 6.29L1.16 4.05L3.33 3.33L4.05 1.16L6.29 1.62Z" fill="#4ba89c" stroke="#4ba89c" stroke-width="0.6" stroke-linejoin="round"/><path d="M4.9 8.2L7 10.2L11.1 6" stroke="#fff" stroke-width="1.7" fill="none"/></svg>
<div class="a" style="left:1421px;top:586.65px;font-size:14px;line-height:18px;font-weight:normal;color:#444;">Cl</div>
<div class="a" style="left:1421px;top:604.65px;font-size:14px;line-height:18px;font-weight:normal;color:#444;">Co</div>
<div class="a" style="left:289px;top:632.7px;width:1145px;height:1px;background:#efeff0"></div>
<div class="a" style="left:309px;top:653.3px;width:16px;height:16px;border:2px solid #cfcfcf;border-radius:2px;background:#fff"></div>
<div class="a" style="left:361px;top:643px;width:104px;height:36px;border-radius:4px;background:#4ba89c"></div>
<div class="a" style="left:428.2px;top:643px;width:1.4px;height:36px;background:#a9dcd5"></div>
<div class="a" style="left:377px;top:652.35px;font-size:14px;line-height:18px;font-weight:normal;color:#fff;letter-spacing:2.009px;-webkit-text-stroke:0.4px #fff">View</div>
<svg class="a" style="left:441px;top:656px" width="13" height="9" viewBox="0 0 13 9"><path d="M1.3 1.5L6.5 6.7L11.7 1.5" stroke="#fff" stroke-width="1.9" fill="none"/></svg>
<svg class="a" style="left:536.6px;top:645.5px" width="30" height="30" viewBox="0 0 30 30"><circle cx="15" cy="15" r="13.3" stroke="#f0f0f3" stroke-width="1" fill="#fefefe"/><path d="M15 1.7A13.3 13.3 0 0 1 22.82 4.24" stroke="#f1dc6e" stroke-width="2.2" fill="none"/></svg>
<div class="a" style="left:536.7px;top:652px;width:30px;text-align:center;font-size:11px;line-height:16px;color:#333;-webkit-text-stroke:0.25px #333">10</div>
<div class="a" style="left:624.7px;top:652.05px;font-size:14px;line-height:18px;font-weight:normal;color:#444;letter-spacing:0.589px;">Inbound Lead</div>
<div class="a" style="left:819.4px;top:652.05px;font-size:14px;line-height:18px;font-weight:normal;color:#444;letter-spacing:0.379px;">US Pharmatech Inc.</div>
<div class="a" style="left:999px;top:661.2px;width:13px;height:1.3px;background:#555"></div>
<div class="a" style="left:1204px;top:646.7px;width:28px;height:28px;border-radius:50%;background:linear-gradient(135deg,#eea24a,#e0743c 55%,#cf4f3a);color:#f8ece6;font-size:8.5px;line-height:28px;text-align:center;letter-spacing:1.3px;padding-left:1.3px;padding-top:0.6px;-webkit-text-stroke:0.35px #f8ece6">DK</div>
<div class="a" style="left:1240.5px;top:651.15px;font-size:14px;line-height:18px;font-weight:normal;color:#444;letter-spacing:0.347px;">Daniel Koo</div>
<svg class="a" style="left:1321.7px;top:651.5px" width="17" height="17" viewBox="0 0 16 16"><path d="M8.00 0.10L9.71 1.62L11.95 1.16L12.67 3.33L14.84 4.05L14.38 6.29L15.90 8.00L14.38 9.71L14.84 11.95L12.67 12.67L11.95 14.84L9.71 14.38L8.00 15.90L6.29 14.38L4.05 14.84L3.33 12.67L1.16 11.95L1.62 9.71L0.10 8.00L1.62 6.29L1.16 4.05L3.33 3.33L4.05 1.16L6.29 1.62Z" fill="#4ba89c" stroke="#4ba89c" stroke-width="0.6" stroke-linejoin="round"/><path d="M4.9 8.2L7 10.2L11.1 6" stroke="#fff" stroke-width="1.7" fill="none"/></svg>
<div class="a" style="left:1421px;top:651.15px;font-size:14px;line-height:18px;font-weight:normal;color:#444;">Fe</div>
<div class="a" style="left:289px;top:688.7px;width:1145px;height:1px;background:#efeff0"></div>
<div class="a" style="left:309px;top:709.3px;width:16px;height:16px;border:2px solid #cfcfcf;border-radius:2px;background:#fff"></div>
<div class="a" style="left:361px;top:699px;width:104px;height:36px;border-radius:4px;background:#4ba89c"></div>
<div class="a" style="left:428.2px;top:699px;width:1.4px;height:36px;background:#a9dcd5"></div>
<div class="a" style="left:377px;top:708.35px;font-size:14px;line-height:18px;font-weight:normal;color:#fff;letter-spacing:2.009px;-webkit-text-stroke:0.4px #fff">View</div>
<svg class="a" style="left:441px;top:712px" width="13" height="9" viewBox="0 0 13 9"><path d="M1.3 1.5L6.5 6.7L11.7 1.5" stroke="#fff" stroke-width="1.9" fill="none"/></svg>
<svg class="a" style="left:536.6px;top:701.5px" width="30" height="30" viewBox="0 0 30 30"><circle cx="15" cy="15" r="13.3" stroke="#f0f0f3" stroke-width="1" fill="#fefefe"/><path d="M15 1.7A13.3 13.3 0 0 1 16.00 1.74" stroke="#f1dc6e" stroke-width="2.2" fill="none"/></svg>
<div class="a" style="left:536.7px;top:708px;width:30px;text-align:center;font-size:11px;line-height:16px;color:#333;-webkit-text-stroke:0.25px #333">0</div>
<div class="a" style="left:624.7px;top:708.05px;font-size:14px;line-height:18px;font-weight:normal;color:#444;letter-spacing:0.589px;">Inbound Lead</div>
<div class="a" style="left:819.4px;top:708.05px;font-size:14px;line-height:18px;font-weight:normal;color:#444;letter-spacing:0.295px;">Basic ChemCo</div>
<div class="a" style="left:999px;top:717.2px;width:13px;height:1.3px;background:#555"></div>
<div class="a" style="left:1204px;top:702.7px;width:28px;height:28px;border-radius:50%;background:linear-gradient(135deg,#b14fe0,#7e3ff0 60%,#5d44ee);color:#f8ece6;font-size:8.5px;line-height:28px;text-align:center;letter-spacing:1.3px;padding-left:1.3px;padding-top:0.6px;-webkit-text-stroke:0.35px #f8ece6">SB</div>
<div class="a" style="left:1240.5px;top:707.15px;font-size:14px;line-height:18px;font-weight:normal;color:#444;letter-spacing:0.297px;">Shana Buyer</div>
<svg class="a" style="left:1333.4px;top:707.5px" width="17" height="17" viewBox="0 0 16 16"><path d="M8.00 0.10L9.71 1.62L11.95 1.16L12.67 3.33L14.84 4.05L14.38 6.29L15.90 8.00L14.38 9.71L14.84 11.95L12.67 12.67L11.95 14.84L9.71 14.38L8.00 15.90L6.29 14.38L4.05 14.84L3.33 12.67L1.16 11.95L1.62 9.71L0.10 8.00L1.62 6.29L1.16 4.05L3.33 3.33L4.05 1.16L6.29 1.62Z" fill="#4ba89c" stroke="#4ba89c" stroke-width="0.6" stroke-linejoin="round"/><path d="M4.9 8.2L7 10.2L11.1 6" stroke="#fff" stroke-width="1.7" fill="none"/></svg>
<div class="a" style="left:1421px;top:698.65px;font-size:14px;line-height:18px;font-weight:normal;color:#444;">Co</div>
<div class="a" style="left:1421px;top:716.65px;font-size:14px;line-height:18px;font-weight:normal;color:#444;">Pi</div>
<div class="a" style="left:289px;top:744.7px;width:1145px;height:1px;background:#efeff0"></div>
<div class="a" style="left:309px;top:765.3px;width:16px;height:16px;border:2px solid #cfcfcf;border-radius:2px;background:#fff"></div>
<div class="a" style="left:361px;top:755px;width:104px;height:36px;border-radius:4px;background:#4ba89c"></div>
<div class="a" style="left:428.2px;top:755px;width:1.4px;height:36px;background:#a9dcd5"></div>
<div class="a" style="left:377px;top:764.35px;font-size:14px;line-height:18px;font-weight:normal;color:#fff;letter-spacing:2.009px;-webkit-text-stroke:0.4px #fff">View</div>
<svg class="a" style="left:441px;top:768px" width="13" height="9" viewBox="0 0 13 9"><path d="M1.3 1.5L6.5 6.7L11.7 1.5" stroke="#fff" stroke-width="1.9" fill="none"/></svg>
<svg class="a" style="left:536.6px;top:757.5px" width="30" height="30" viewBox="0 0 30 30"><circle cx="15" cy="15" r="13.3" stroke="#f0f0f3" stroke-width="1" fill="#fefefe"/><path d="M15 1.7A13.3 13.3 0 0 1 22.82 4.24" stroke="#f1dc6e" stroke-width="2.2" fill="none"/></svg>
<div class="a" style="left:536.7px;top:764px;width:30px;text-align:center;font-size:11px;line-height:16px;color:#333;-webkit-text-stroke:0.25px #333">10</div>
<div class="a" style="left:624.7px;top:764.05px;font-size:14px;line-height:18px;font-weight:normal;color:#444;letter-spacing:0.589px;">Inbound Lead</div>
<div class="a" style="left:819.4px;top:754.85px;font-size:14px;line-height:18px;font-weight:normal;color:#444;letter-spacing:0.316px;">BeWuDe - Szkolenia i</div>
<div class="a" style="left:819.4px;top:772.95px;font-size:14px;line-height:18px;font-weight:normal;color:#444;letter-spacing:0.611px;">Recepturowanie</div>
<div class="a" style="left:999px;top:773.2px;width:13px;height:1.3px;background:#555"></div>
<svg class="a" style="left:1204px;top:758px" width="28" height="28" viewBox="0 0 28 28"><path d="M4 5.1Q13 9.5 22.7 4.2L8.9 22.9Q6.5 15 0.4 11.3Q1.5 7 4 5.1Z" fill="#e88a42"/><path d="M22.7 4.2Q28 8.5 27.6 15Q27 26.5 13.8 28.7Q9 28.8 5.8 26.4Z" fill="#c93420"/></svg>
<div class="a" style="left:1240.5px;top:754.75px;font-size:14px;line-height:18px;font-weight:normal;color:#444;letter-spacing:0.457px;">Beata</div>
<div class="a" style="left:1240.5px;top:772.25px;font-size:14px;line-height:18px;font-weight:normal;color:#444;letter-spacing:0.544px;">Domagalska</div>
<svg class="a" style="left:1370px;top:756.5px" width="17" height="17" viewBox="0 0 16 16"><path d="M8.00 0.10L9.71 1.62L11.95 1.16L12.67 3.33L14.84 4.05L14.38 6.29L15.90 8.00L14.38 9.71L14.84 11.95L12.67 12.67L11.95 14.84L9.71 14.38L8.00 15.90L6.29 14.38L4.05 14.84L3.33 12.67L1.16 11.95L1.62 9.71L0.10 8.00L1.62 6.29L1.16 4.05L3.33 3.33L4.05 1.16L6.29 1.62Z" fill="#4ba89c" stroke="#4ba89c" stroke-width="0.6" stroke-linejoin="round"/><path d="M4.9 8.2L7 10.2L11.1 6" stroke="#fff" stroke-width="1.7" fill="none"/></svg>
<div class="a" style="left:1421px;top:763.15px;font-size:14px;line-height:18px;font-weight:normal;color:#444;">Ko</div>
<div class="a" style="left:289px;top:800.7px;width:1145px;height:1px;background:#efeff0"></div>
<div class="a" style="left:0;top:809px;width:1466px;height:1px;background:#fbf2ec"></div>
<div class="a" style="left:1435px;top:57px;width:31px;height:753px;background:#f4f4f4"></div>
<div class="a" style="left:1391px;top:722px;width:56px;height:56px;border-radius:50%;background:#262b2b"></div>
<svg class="a" style="left:1407.5px;top:740px" width="24" height="22" viewBox="0 0 24 22"><path d="M1.8 1.5H21.2V19.5L17.2 15.6H1.8Z" stroke="#fff" stroke-width="1.7" fill="none" stroke-linejoin="miter"/><path d="M7.3 9.3Q11.5 11.3 15.7 9.3" stroke="#fff" stroke-width="1.7" fill="none"/></svg>
<svg class="a" style="left:736px;top:431px" width="12" height="20" viewBox="0 0 12 20"><path d="M1 1V14L4.2 11.1L6.5 16.3L8.5 15.5L6.3 10.4H10.3Z" fill="#222" stroke="#fff" stroke-width="0.8"/></svg>
</body></html>
